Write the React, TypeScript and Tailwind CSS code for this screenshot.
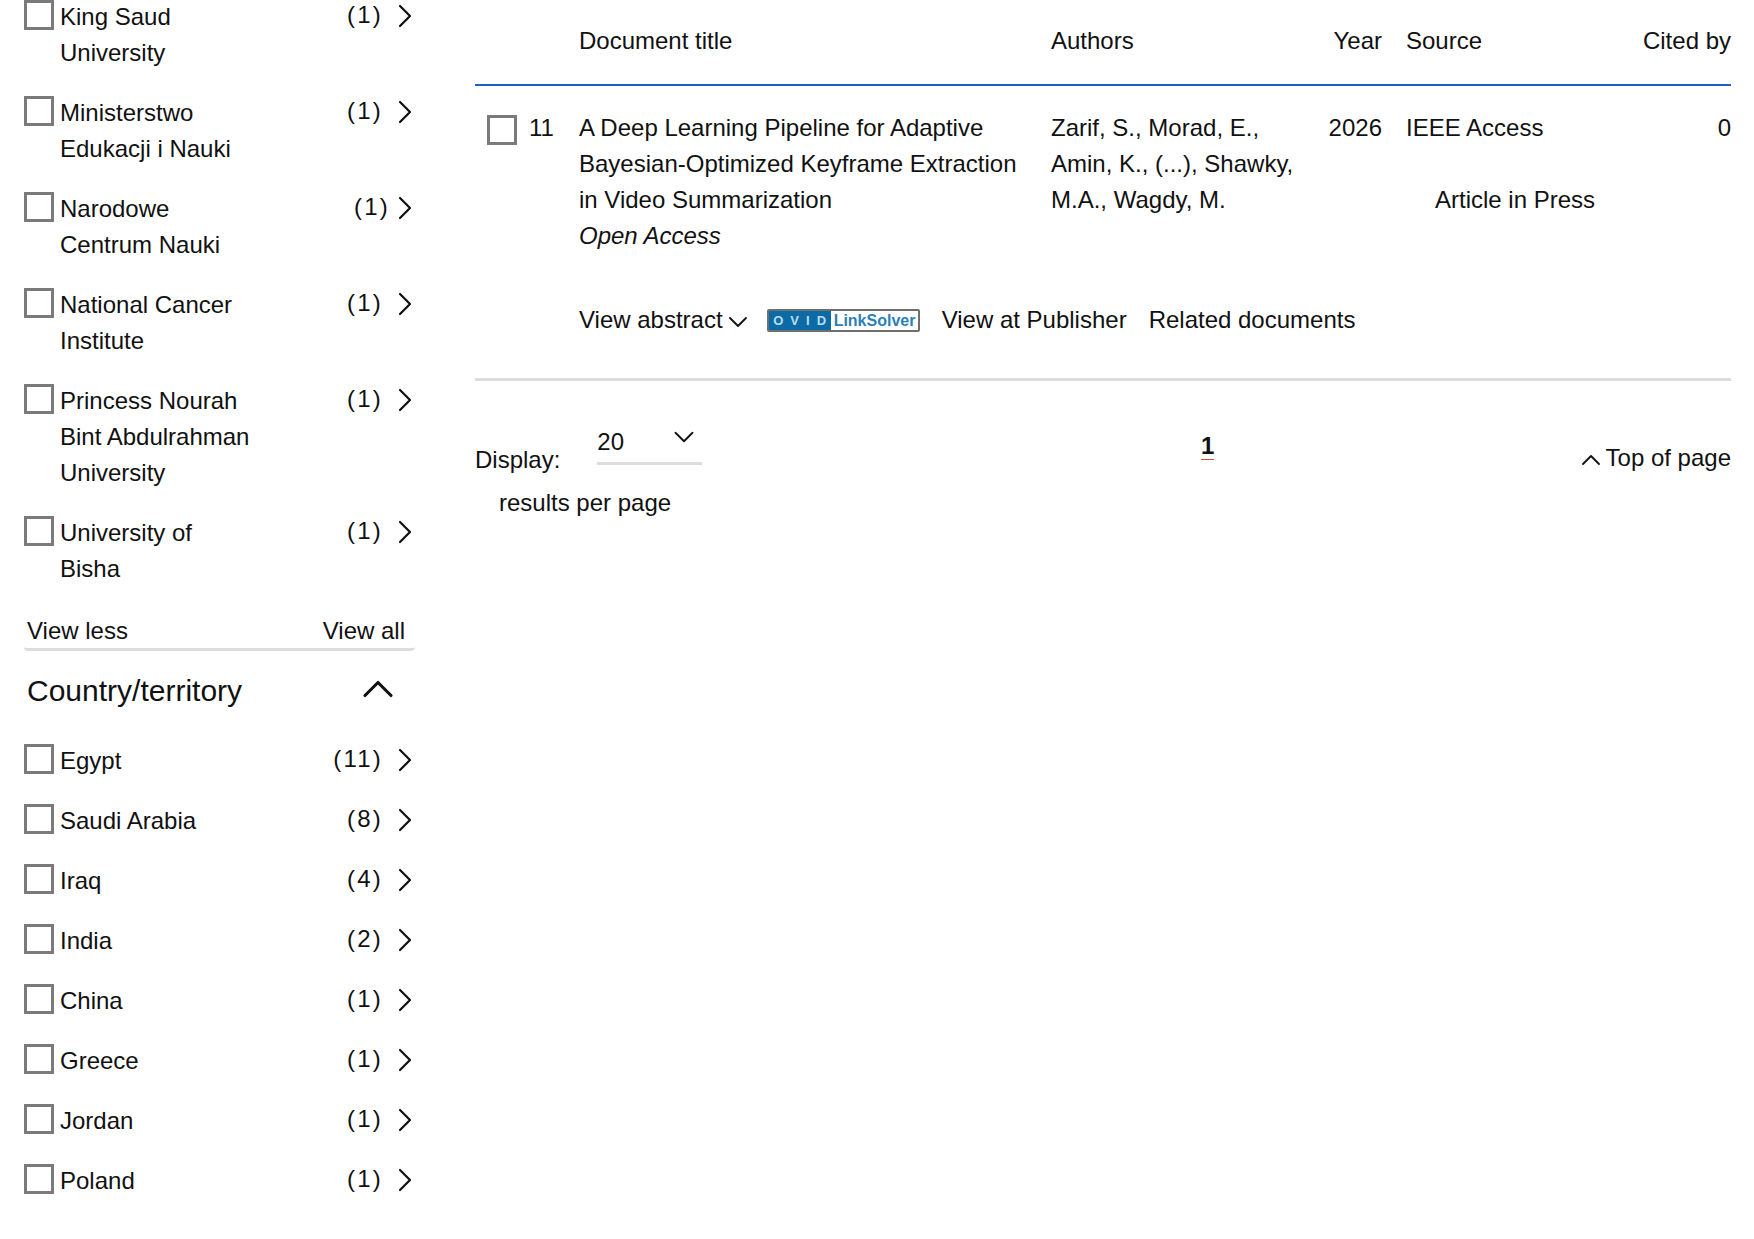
import { ChevronDown, ChevronRight, ChevronUp } from "lucide-react";

const institutions = [
  { name: "King Saud University", count: 1 },
  { name: "Ministerstwo Edukacji i Nauki", count: 1 },
  { name: "Narodowe Centrum Nauki", count: 1, nudge: true },
  { name: "National Cancer Institute", count: 1 },
  { name: "Princess Nourah Bint Abdulrahman University", count: 1 },
  { name: "University of Bisha", count: 1 },
];

const countries = [
  { name: "Egypt", count: 11 },
  { name: "Saudi Arabia", count: 8 },
  { name: "Iraq", count: 4 },
  { name: "India", count: 2 },
  { name: "China", count: 1 },
  { name: "Greece", count: 1 },
  { name: "Jordan", count: 1 },
  { name: "Poland", count: 1 },
];

function Checkbox({ className = "" }: { className?: string }) {
  return <span className={`block h-[30px] w-[30px] shrink-0 border-[3px] border-[#7a7a7a] bg-white ${className}`} />;
}

function FilterRow({ name, count, nudge }: { name: string; count: number; nudge?: boolean }) {
  return (
    <li className="flex h-auto items-start pb-6">
      <Checkbox className="mt-[1px]" />
      <span className="ml-[6px] w-[191px]">{name}</span>
      <span className={`-mt-[2px] ml-auto tracking-[2.2px] ${nudge ? "-mr-[5px]" : "mr-[2px]"}`}>({count})</span>
      <ChevronRight className="-mt-[3px] -mr-[10px] -mb-[1px] h-[40px] w-[40px] shrink-0" strokeWidth={1.35} />
    </li>
  );
}

function OvidBadge() {
  return (
    <span className="flex h-[23px] w-[153px] overflow-hidden rounded-[2px] border-2 border-[#6f6f6f] font-['Liberation_Sans',sans-serif] text-[16px] font-bold leading-[19px]">
      <span className="flex w-[62px] items-center justify-center bg-[#0b6ba6] pl-[7px] text-[13px] tracking-[7px] text-[#bcdcef]">OVID</span>
      <span className="flex-1 bg-white pl-[3px] text-[#2c7fb8]">LinkSolver</span>
    </span>
  );
}

export default function App() {
  return (
    <div className="flex h-[1239px] w-[1754px] overflow-hidden bg-white font-['Liberation_Sans',Arial,sans-serif] text-[24px] leading-[36px] text-[#111111]">
      {/* Filters */}
      <aside className="ml-[24px] -mt-[1px] w-[391px] shrink-0">
        <ul>
          {institutions.map((row) => (
            <FilterRow key={row.name} {...row} />
          ))}
        </ul>
        <div className="mt-[2px] flex justify-between rounded-b-[4px] border-b-[3px] border-[#dddddd] pr-[10px] pl-[3px] pb-0 leading-[35px]">
          <span>View less</span>
          <span>View all</span>
        </div>
        <div className="mt-[19px] mb-[31px] flex h-[42px] items-center justify-between pr-[20px] pl-[3px]">
          <h2 className="text-[30px] leading-[42px]">Country/territory</h2>
          <ChevronUp className="-mt-[11px] -mr-[9px] -mb-[7px] h-[52px] w-[52px]" strokeWidth={1.45} />
        </div>
        <ul>
          {countries.map((row) => (
            <FilterRow key={row.name} {...row} />
          ))}
        </ul>
      </aside>

      {/* Results */}
      <main className="ml-[60px] w-[1256px] shrink-0">
        <div className="grid grid-cols-[104px_472px_249px_82px_1fr_auto] border-b-2 border-[#1f62bd] pt-[23px] pb-[25px]">
          <span />
          <span>Document title</span>
          <span>Authors</span>
          <span className="text-right">Year</span>
          <span className="pl-[24px]">Source</span>
          <span>Cited by</span>
        </div>

        <div className="grid grid-cols-[104px_472px_249px_82px_1fr_auto] pt-[24px]">
          <div className="flex items-start pl-[12px]">
            <Checkbox className="mt-[5px]" />
            <span className="ml-[12px]">11</span>
          </div>
          <div className="pr-[30px]">
            A Deep Learning Pipeline for Adaptive Bayesian-Optimized Keyframe Extraction in Video Summarization
            <div className="italic">Open Access</div>
          </div>
          <div>Zarif, S., Morad, E., Amin, K., (...), Shawky, M.A., Wagdy, M.</div>
          <div className="text-right">2026</div>
          <div className="pl-[24px]">
            <div>IEEE Access</div>
            <div className="mt-[36px] pl-[29px]">Article in Press</div>
          </div>
          <div>0</div>
        </div>

        <div className="mt-[48px] flex h-[36px] items-center pl-[104px]">
          <span>View abstract</span>
          <ChevronDown className="mt-[4px] -ml-[1px] h-[32px] w-[32px]" strokeWidth={1.4} />
          <span className="mr-[22px] ml-[13px]">
            <OvidBadge />
          </span>
          <span>View at Publisher</span>
          <span className="ml-[22px]">Related documents</span>
        </div>
        <div className="mt-[40px] border-b-[3px] border-[#dddddd]" />

        <div className="flex items-start">
          <div className="w-[726px] shrink-0">
            <div className="flex items-start">
              <span className="mt-[61px]">Display:</span>
              <div className="mt-[43px] ml-[37px] flex h-[41px] w-[105px] justify-between border-b-[3px] border-[#dddddd]">
                <span>20</span>
                <ChevronDown className="-mt-[4px] mr-[1px] h-[34px] w-[34px]" strokeWidth={1.3} />
              </div>
            </div>
            <div className="mt-[7px] pl-[24px]">results per page</div>
          </div>
          <span className="mt-[51px] border-b border-[#c8562a] font-bold leading-[27px]">1</span>
          <div className="mt-[59px] ml-auto flex h-[36px] items-center">
            <ChevronUp className="mt-[4px] -mr-[1px] h-[32px] w-[32px]" strokeWidth={1.4} />
            <span>Top of page</span>
          </div>
        </div>
      </main>
    </div>
  );
}
